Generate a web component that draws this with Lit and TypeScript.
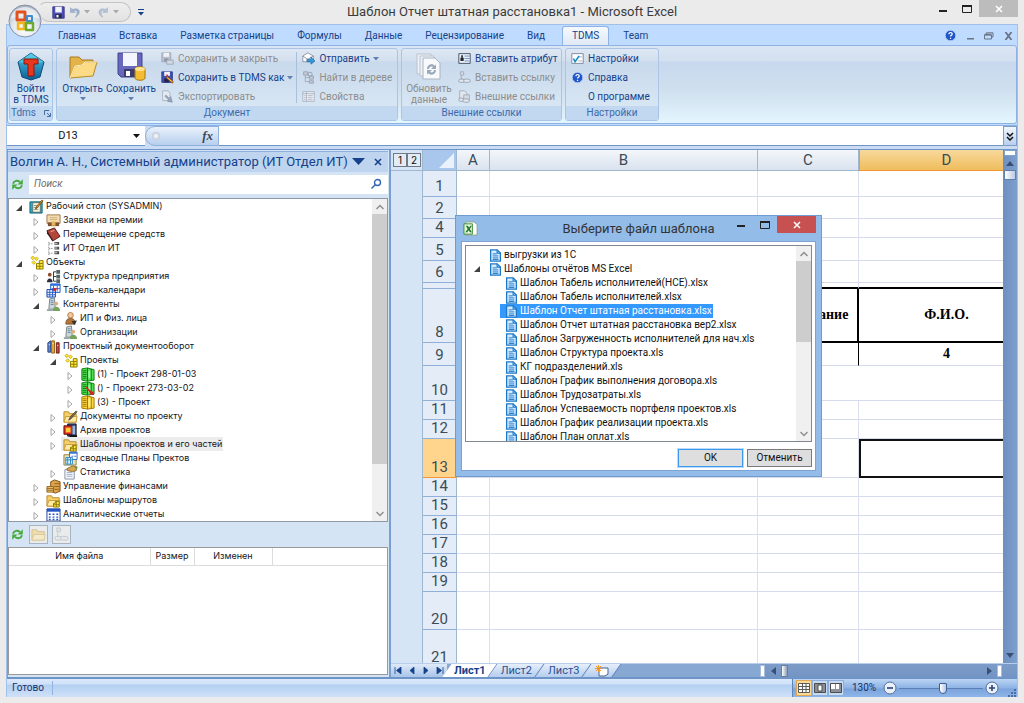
import { LitElement, html, css, svg, nothing, TemplateResult } from "lit";
import { customElement, state } from "lit/decorators.js";
import { classMap } from "lit/directives/class-map.js";
import { styleMap } from "lit/directives/style-map.js";

const diamonds = svg`<path d="M4 1l2 2-2 2-2-2zM8 2l2 2-2 2-2-2zM5 6l2 2-2 2-2-2z" fill="#ffe52e" stroke="#b59a00" stroke-width=".7"/>
  <path d="M8 15V9h3V6h4v9z" fill="#ffe93b" stroke="#8c7a00"/><path d="M8 12h7M11 9h4M11.500 9v6" stroke="#8c7a00"/>`;
const folder = svg`<path d="M1 14V3h5l1 2h7v9z" fill="#f4cf6b" stroke="#b98a25"/><path d="M1 14l2-6h12l-1 6z" fill="#ffe9a6" stroke="#c79b35"/>`;
const cabinet = (a: string, b: string) => svg`<path d="M2 2l6-1v14l-6-1z" fill="${a}" stroke="${b}"/><path d="M8 1l7 2v11l-7 1z" fill="${a}" stroke="${b}"/>
  <path d="M3 4h4M3 6h4M3 8h4M3 10h4M3 12h4M12 2v12" stroke="${b}"/><path d="M9 4h2v8H9z" fill="#fff" opacity=".5"/>`;
const bust = (a: string) => svg`<circle cx="8" cy="4.500" r="3" fill="#f6c795" stroke="#8c5a2a" stroke-width=".7"/><path d="M3 14c0-5 2-6 5-6s5 1 5 6z" fill="${a}" stroke="#5b4225" stroke-width=".7"/>`;

const ICONS: Record<string, TemplateResult | TemplateResult<2>> = {
  desk: svg`<path d="M1 3h13v12H1z" fill="#29a9bd" stroke="#12687a"/><path d="M4 4h8v10H4z" fill="#fff8dc" stroke="#555" stroke-width=".7"/><path d="M5 7h4M5 9h5M5 11h5" stroke="#8a8a8a"/><path d="M7 11l1-3 6-7 1 1-6 7z" fill="#f0a521" stroke="#5c3a06" stroke-width=".8"/>`,
  cert: svg`<path d="M1 2h14v9H1z" fill="#f3ddb0" stroke="#9d7a48"/><path d="M2 10h12v4H2z" fill="#7d5232"/><path d="M6 9h4v6l-2-2-2 2z" fill="#e3b65b"/><path d="M4 5h8M4 7h8" stroke="#cfae7a"/>`,
  book: svg`<path d="M1 4l8-3 6 9-8 5z" fill="#b5463c" stroke="#5a1712"/><path d="M1 4v3l6 8v-2z" fill="#3b1a18"/><path d="M5 5l4-1.500" stroke="#f0b0a5"/>`,
  tree: svg`<path d="M3 1v14M3 3h4M3 8h4M3 13h4" stroke="#8a8a8a" stroke-dasharray="1.500 1"/><path d="M9 1h5v3H9zM9 6h5v3H9zM9 11h5v3H9z" fill="#4a4a4a"/><path d="M9 2.500h3M9 7.500h3M9 12.500h3" stroke="#ddd"/>`,
  objects: diamonds,
  struct: svg`<circle cx="4" cy="6" r="2" fill="#8c4b2a"/><path d="M1 14c0-5 6-5 6 0z" fill="#2d2d3b"/><path d="M8 3v10M8 3h3M8 8h3M8 13h3" stroke="#333"/><path d="M11 1h4v4h-4zM11 6h4v4h-4zM11 11h4v4h-4z" fill="#566" />`,
  calendar: svg`<path d="M5 1h10v9H5z" fill="#fff" stroke="#1256c8"/><path d="M5 1h10v2H5z" fill="#2d6fe0"/><path d="M1 7h9v8H1z" fill="#e8f0ff" stroke="#0f3fa8"/><path d="M1 10h9M1 12.500h9M4 7v8M7 7v8M8 3v6M12 3v6M6 6h9" stroke="#1c55c9" stroke-width=".9"/><path d="M8 5l4 1-3 3z" fill="#e02020"/>`,
  partner: svg`<path d="M4 2l5-1 1 12H3z" fill="#cdd5d8" stroke="#76838a"/><path d="M5 4h3M5 6h3M5 8h3" stroke="#5f8aa8"/><circle cx="11" cy="7" r="2" fill="#e3ad76"/><path d="M7 15c0-6 8-6 8 0z" fill="#76a35c"/><path d="M1 13h6v2H1z" fill="#9aa5a8"/>`,
  person: svg`${bust("#b87436")}<path d="M9 11l6-1-3 5z" fill="#333"/>`,
  books: svg`<path d="M2 4l3-2v12H2z" fill="#5f86d8" stroke="#26427c"/><path d="M6 2h3v13H6z" fill="#e8b23d" stroke="#875f10"/><path d="M11 4h3v11h-3z" fill="#c8463a" stroke="#6b1a14"/><path d="M3 6h1M7 5h1M12 7h1" stroke="#fff"/>`,
  green: cabinet("#4fe04f", "#0d7a12"),
  greenred: svg`${cabinet("#4fe04f", "#0d7a12")}<path d="M7 6l6 6 1-2 1 5-5-1 1-1-5-6z" fill="#e01b2b"/>`,
  yellow: cabinet("#ffd83d", "#a07400"),
  folderpen: svg`${folder}<path d="M6 12l2-4 6-6 1 1-6 7z" fill="#7a6a55" stroke="#3f3424" stroke-width=".7"/>`,
  folder,
  archive: svg`<path d="M5 1h9v13H5z" fill="#2d4e92" stroke="#111"/><path d="M1 3h9v9H1z" fill="#e83121" stroke="#5c0c06"/><path d="M3 5h5v5H3z" fill="#ffcf3a"/><path d="M10 3h3v9h-3z" fill="#8fb8e8"/><path d="M7 13h8v2H7z" fill="#111"/>`,
  foldergrid: svg`${folder}<path d="M8 15v-4h2V9h4v6z" fill="#ffe93b" stroke="#8c7a00"/><path d="M8 12.500h6M11 9v6" stroke="#8c7a00"/>`,
  plans: svg`<path d="M1 4h6l1 2h6v9H1z" fill="#e9e4b5" stroke="#8c8140"/><path d="M7 1h8v8H7z" fill="#fff" stroke="#2b62b8"/><path d="M7 1h8v2H7zM9 5h2v1H9zM12 5h2v1h-2z" fill="#3b78d6"/><path d="M3 7h7v7H3z" fill="#eaf4ff" stroke="#2a86c4"/><path d="M3 9.500h7M5 7v7M8 7v7" stroke="#2a86c4"/>`,
  stats: svg`<path d="M2 5h10v10H2z" fill="#f2f5fa" stroke="#8793a5"/><path d="M4 8h6M4 10h6M4 12h6" stroke="#a3b2c8"/><path d="M4 4l6-3 5 1-1 4-4 1-5-1z" fill="#d9a84e" stroke="#7c5417" stroke-width=".8"/><path d="M12 2h3v3z" fill="#5a9a3c"/>`,
  finance: svg`<path d="M5 3l4-2 6 2v10l-5 2-5-2z" fill="#dca34a" stroke="#7d4e13"/><path d="M1 8h7v6H1z" fill="#f0c878" stroke="#94641e"/><path d="M1 10h7M1 12h7M9 5h6M9 8h6M9 11h6" stroke="#94641e"/>`,
  table: svg`<path d="M1 2h14v13H1z" fill="#fff" stroke="#1a3f98"/><path d="M1 2h14v3H1z" fill="#2453c4"/><path d="M3 7h2v1.500H3zM7 7h2v1.500H7zM11 7h2v1.500h-2zM3 10h2v1.500H3zM7 10h2v1.500H7zM11 10h2v1.500h-2zM3 12.500h2v1.500H3zM7 12.500h2v1.500H7zM11 12.500h2v1.500h-2z" fill="#2453c4"/>`,
  doc: svg`<path d="M2 1h8l4 4v10H2z" fill="#d9ecff" stroke="#1c79c9" stroke-width="1.600"/><path d="M10 1v4h4" fill="none" stroke="#1c79c9" stroke-width="1.400"/><path d="M4.500 6h5M4.500 8.500h7M4.500 11h7M4.500 13h7" stroke="#1c79c9" stroke-width="1.200"/>`,
  refresh: svg`<path d="M2.500 7C3.500 3 8 2.500 11 5M13.500 9c-1 4-5.500 4.500-8.500 2" fill="none" stroke="#45ab3c" stroke-width="2.400"/><path d="M14.500 1.500V8H8zM1.500 14.500V8H8z" fill="#45ab3c"/>`,
  search: svg`<circle cx="10" cy="6" r="4" fill="none" stroke="#2f62b0" stroke-width="1.800"/><path d="M7 9l-5 5" stroke="#2f62b0" stroke-width="2"/>`,
  floppy: svg`<path d="M1 1h14v14H1z" fill="#4d4fb5" stroke="#2b2c80"/><path d="M4 1h8v7H4z" fill="#f2f5fc"/><path d="M4 10h8v5H4z" fill="#2a2a4d"/><path d="M5.500 11h2.500v3H5.500z" fill="#fff"/>`,
  undo: svg`<path d="M3 2v6h6L7 6c4-2 6 2 2 8 8-5 6-13-3-10L5 4z" fill="#9fb1cf" stroke="#8296b8" stroke-width=".5"/>`,
  redo: svg`<path d="M13 2v6H7l2-2C5 4 4 8 7 14-1 9 2 1 10 4l1 0z" fill="#b6c2d6" stroke="#9aa8c0" stroke-width=".5"/>`,
  saveclose: svg`<path d="M1 1h11v11H1z" fill="#b8c0cf" stroke="#97a2b5"/><path d="M3 1h7v5H3z" fill="#eef1f6"/><path d="M4 8h5v4H4z" fill="#8d97a8"/><path d="M7 10h8v5H7z" fill="#d3d8e2" stroke="#97a2b5"/>`,
  saveas: svg`<path d="M1 1h13v13H1z" fill="#3f52b8" stroke="#27357f"/><path d="M4 1h7v5H4z" fill="#f2f5fc"/><path d="M4 9h6v5H4z" fill="#1e2550"/><path d="M7 6l8 7-1 2-7-6z" fill="#f6c445" stroke="#8a3a1a"/><path d="M6 4l3 1-1 3z" fill="#d83a22"/>`,
  exporting: svg`<path d="M2 1h7l2 3v9H2z" fill="#e6eaf0" stroke="#a3adbd"/><path d="M6 6l4 4 2-2 2 7-6-1 1-2-4-4z" fill="#97a5bb" stroke="#76859e" stroke-width=".6"/>`,
  send: svg`<path d="M1 5l6-4 7 4v7H1z" fill="#fff" stroke="#7d8797"/><path d="M1 5l6 4 7-4" fill="none" stroke="#7d8797"/><path d="M6 9h5V6l5 5-5 4v-3H6z" fill="#2f9be0" stroke="#15609c" stroke-width=".7"/>`,
  find: svg`<path d="M4 4v9M4 8h5M4 13h5" stroke="#9aa5b5"/><path d="M2 1h5v4H2zM9 6h5v4H9zM9 12h5v3H9z" fill="#c6cdd8" stroke="#929db0"/><circle cx="10" cy="4" r="2.500" fill="none" stroke="#8b97aa"/>`,
  props: svg`<path d="M1 2h14v12H1z" fill="#eef1f5" stroke="#a3adbd"/><path d="M1 4.500h14M5.500 2v12M7 7h6M7 9.500h6M7 12h6M2.500 7h2M2.500 9.500h2M2.500 12h2" stroke="#a3adbd"/>`,
  attr: svg`<path d="M1 2h14v12H1z" fill="#e8f1fb" stroke="#2f3a4c"/><path d="M3 7h4v4H3z" fill="#222"/><path d="M4 4h2v3H4z" fill="#222"/><path d="M8 5h6M8 8h6M8 11h6" stroke="#5d7fae"/>`,
  link: svg`<path d="M3 1h4v4H3z" fill="#d5dae3" stroke="#9ba6b8"/><path d="M4 5v6h3" fill="none" stroke="#9ba6b8"/><rect x="1" y="10" width="7" height="4" rx="2" fill="#e3e7ed" stroke="#8f9bb0"/><rect x="7" y="10" width="8" height="4" rx="2" fill="#e3e7ed" stroke="#8f9bb0"/>`,
  links: svg`<path d="M2 1h6l3 3v8H2z" fill="#e3e7ed" stroke="#9ba6b8"/><path d="M7 6h7v7H7z" fill="#d5dae3" stroke="#9ba6b8"/><rect x="1" y="10" width="6" height="4" rx="2" fill="#e3e7ed" stroke="#8f9bb0"/><rect x="6" y="11" width="8" height="4" rx="2" fill="#e3e7ed" stroke="#8f9bb0"/>`,
  check: svg`<path d="M1 2h14v12H1z" fill="#fff" stroke="#6c7a90"/><path d="M9 6h5M9 11h5" stroke="#9aa5b5"/><path d="M3 8l2 4 5-7" fill="none" stroke="#1d8bc4" stroke-width="2"/>`,
  help: svg`<circle cx="8" cy="8" r="6.500" fill="#1f56c8" stroke="#b9cdf2" stroke-width="1.200"/><path d="M6 6.500c0-3 4.500-2.800 4 0-.3 1.200-2 1.200-2 2.800" fill="none" stroke="#fff" stroke-width="1.500"/><path d="M7.300 10.800h1.500v1.500H7.300z" fill="#fff"/>`,
  excel: svg`<path d="M3 1h9l3 3v11H3z" fill="#fff" stroke="#8aa58a"/><path d="M1 3h9v11H1z" fill="#e6f4e0" stroke="#3a8b35"/><path d="M3 5h2l1.500 2L8 5h1.500L7.300 8.500 9.500 12H7.500L6 9.800 4.500 12H2.500L5 8.500z" fill="#1f7a28"/>`,
};

const icon = (name: string, cls = "i15") => html`<svg class=${cls} viewBox="0 0 16 16" aria-hidden="true">${ICONS[name]}</svg>`;
const down = html`<svg class="caret" viewBox="0 0 6 4" aria-hidden="true"><path d="M0 0h6L3 3.500z" fill="currentColor"/></svg>`;
const chevron = (d: string) => html`<svg class="chev" viewBox="0 0 8 6" aria-hidden="true"><path d=${d} fill="none" stroke="#8f8f8f" stroke-width="1.500"/></svg>`;
const UP = "M.5 5L4 1.500 7.500 5", DOWN = "M.5 1L4 4.500 7.500 1";

const twisty = (s: string) => s === "" ? html`<span class="twisty"></span>` : html`<button class="twisty" aria-label=${s === "o" ? "Свернуть" : "Развернуть"}>
  <svg class="i8" viewBox="0 0 8 8" aria-hidden="true">${s === "o" ? svg`<path d="M7 1v6H1z" fill="#404040"/>` : svg`<path d="M2 .5v7L6 4z" fill="#fff" stroke="#a6a6a6"/>`}</svg></button>`;

interface Node { l: number; t: string; i: string; s: string }
const n = (l: number, s: string, i: string, t: string): Node => ({ l, s, i, t });
const rowClass = (r: Node, sel: boolean) => classMap({ row: true, ["l" + r.l]: true, sel });

const TREE: Node[] = [
  n(0, "o", "desk", "Рабочий стол (SYSADMIN)"), n(1, "c", "cert", "Заявки на премии"), n(1, "c", "book", "Перемещение средств"),
  n(1, "c", "tree", "ИТ Отдел ИТ"), n(0, "o", "objects", "Объекты"), n(1, "c", "struct", "Структура предприятия"),
  n(1, "c", "calendar", "Табель-календари"), n(1, "o", "partner", "Контрагенты"), n(2, "c", "person", "ИП и Физ. лица"),
  n(2, "c", "partner", "Организации"), n(1, "o", "books", "Проектный документооборот"), n(2, "o", "objects", "Проекты"),
  n(3, "c", "green", "(1) - Проект 298-01-03"), n(3, "c", "greenred", "() - Проект 273-03-02"), n(3, "c", "yellow", "(3) - Проект"),
  n(2, "c", "folderpen", "Документы по проекту"), n(2, "c", "archive", "Архив проектов"),
  n(2, "c", "foldergrid", "Шаблоны проектов и его частей"), n(2, "", "plans", "сводные Планы Пректов"),
  n(2, "c", "stats", "Статистика"), n(1, "c", "finance", "Управление финансами"), n(1, "c", "foldergrid", "Шаблоны маршрутов"),
  n(1, "c", "table", "Аналитические отчеты"),
];

const FILES: Node[] = [
  n(0, "", "doc", "выгрузки из 1С"), n(0, "o", "doc", "Шаблоны отчётов MS Excel"),
  ...["Шаблон Табель исполнителей(НСЕ).xlsx", "Шаблон Табель исполнителей.xlsx", "Шаблон Отчет штатная расстановка.xlsx",
    "Шаблон Отчет штатная расстановка вер2.xlsx", "Шаблон Загруженность исполнителей для нач.xls", "Шаблон Структура проекта.xls",
    "КГ подразделений.xls", "Шаблон График выполнения договора.xls", "Шаблон Трудозатраты.xls", "Шаблон Успеваемость портфеля проектов.xls",
    "Шаблон График реализации проекта.xls", "Шаблон План оплат.xls"].map(t => n(1, "", "doc", t)),
];

const ROWS: [number, number][] = [[1, 26], [2, 22], [4, 19], [5, 23], [6, 22], [7, 6], [8, 54], [9, 23], [10, 35], [11, 19], [12, 19],
  [13, 39], [14, 19], [15, 19], [16, 19], [17, 19], [18, 19], [19, 19], [20, 38], [21, 38]];

const shared = css`
  *, *::before, *::after { box-sizing: border-box; }
  :host { box-sizing: border-box; }
  button, input { font: inherit; color: inherit; margin: 0; padding: 0; border: 0; background: none; min-width: 0; }
  svg { display: block; flex: none; }
  .i8 { width: 8px; height: 8px; }
  .i11 { width: 12px; height: 12px; }
  .i13 { width: 13px; height: 13px; }
  .i15 { width: 15px; height: 15px; }
  .chev { width: 8px; height: 6px; }
  .rows { flex: 1; min-width: 0; overflow: hidden; list-style: none; margin: 0; padding: 0; }
  .row { display: flex; align-items: center; height: 14px; white-space: nowrap; }
  .twisty { flex: none; display: grid; place-items: center; height: 14px; }
  .scroll { display: flex; flex-direction: column; align-items: center; background: #f0f0f0; flex: none; }
  .scroll .arrow { height: 15px; display: grid; place-items: center; flex: none; }
  .thumb { background: #cdcdcd; width: 100%; }
  .gap { flex: 1; }
`;

@customElement("tdms-pane")
class TdmsPane extends LitElement {
  static styles = [shared, css`
    :host { display: flex; flex-direction: column; flex: none; width: 384px; background: #d5e4f4; font: 9px/14px Inter, sans-serif; color: #15151c; border: solid #7b9fcd; border-width: 0 2px 0 1px; padding: 1px 1px 2px 0; }
    .head { display: flex; align-items: center; flex: none; height: 21px; background: #bfd4ee; border-top: 1px solid #8fb0dc; color: #15428b; font: 13px/20px Roboto, sans-serif; padding: 0 1px 0 2px; }
    .head h2 { flex: 1; font: inherit; margin: 0; white-space: nowrap; }
    .head button { display: grid; place-items: center; width: 19px; height: 16px; }
    .search { display: flex; align-items: center; flex: none; height: 26px; gap: 5px; padding: 0 0 2px 3px; }
    .box { flex: 1; display: flex; align-items: center; height: 19px; background: #fff; padding: 0 6px 0 5px; }
    .box input { flex: 1; height: 15px; padding-bottom: 2px; outline: 0; font: italic 10px/13px Roboto, sans-serif; }
    .box input::placeholder { color: #6d6d6d; }
    .tree { display: flex; flex: none; height: 324px; background: #fff; border: 1px solid #8f98a5; }
    .row .twisty { width: 20px; }
    .row .i15 { margin-right: 2px; }
    .l1 { padding-left: 17px; }
    .l2 { padding-left: 34px; }
    .l3 { padding-left: 51px; }
    .row .i8 { margin: 3px 0 0; }
    .label { padding-right: 1px; }
    .sel .label { background: #ececec; box-shadow: -19px 0 0 #ececec; }
    .sel svg { position: relative; z-index: 1; }
    .scroll { width: 15px; }
    .thumb { height: 250px; }
    .tools { display: flex; align-items: center; height: 25px; gap: 4px; padding-left: 3px; flex: none; }
    .plain { width: 14px; }
    .sq { width: 19px; height: 19px; border: 1px solid #a8b4c2; background: #e9ecea; display: grid; place-items: center; }
    .sq svg { opacity: .45; }
    .files { flex: 1; background: #fff; border: 1px solid #9a9a9a; min-height: 40px; }
    table { width: 100%; border-collapse: collapse; table-layout: fixed; }
    th { font-weight: 400; height: 17px; padding: 0; border-right: 1px solid #dcdcdc; border-bottom: 1px solid #dcdcdc; text-align: center; }
    th:last-child { border-right: 0; }
    .w1 { width: 141px; } .w2 { width: 44px; } .w3 { width: 78px; }
  `];
  @state() private picked = 17;
  render() {
    return html`
      <div class="head"><h2>Волгин А. Н., Системный администратор (ИТ Отдел ИТ)</h2>
        <button aria-label="Меню"><svg width="13" height="8" viewBox="0 0 13 8"><path d="M0 0h13L6.500 7z" fill="#15428b"/></svg></button>
        <button aria-label="Закрыть"><svg width="8" height="8" viewBox="0 0 8 8"><path d="M1 1l6 6M7 1L1 7" stroke="#15428b" stroke-width="1.600"/></svg></button></div>
      <div class="search"><button aria-label="Обновить">${icon("refresh", "i13")}</button>
        <div class="box"><input type="search" aria-label="Поиск" placeholder="Поиск"><button aria-label="Найти">${icon("search", "i11")}</button></div></div>
      <div class="tree"><ul class="rows">${TREE.map((r, k) => html`<li class=${rowClass(r, k === this.picked)} @click=${() => { this.picked = k; }}>${twisty(r.s)}${icon(r.i)}<span class="label">${r.t}</span></li>`)}</ul>
        <div class="scroll"><span class="arrow">${chevron(UP)}</span><span class="thumb"></span><span class="gap"></span><span class="arrow">${chevron(DOWN)}</span></div></div>
      <div class="tools"><button class="plain" aria-label="Обновить">${icon("refresh", "i13")}</button>
        <button class="sq" aria-label="Открыть" disabled>${icon("folder")}</button><button class="sq" aria-label="Связать" disabled>${icon("link")}</button></div>
      <div class="files"><table><colgroup><col class="w1"><col class="w2"><col class="w3"><col></colgroup>
        <thead><tr><th>Имя файла</th><th>Размер</th><th>Изменен</th><th></th></tr></thead></table></div>`;
  }
}

@customElement("template-dialog")
class TemplateDialog extends LitElement {
  static styles = [shared, css`
    :host { display: flex; flex-direction: column; width: 367px; background: #93bce9; border: 1px solid #6f9bd0; padding: 0 5px 5px; font: 10px/14px Roboto, sans-serif; color: #111; }
    .bar { display: grid; grid-template-columns: 1fr auto 1fr; align-items: center; height: 25px; font: 13px/22px Roboto, sans-serif; color: #333; }
    .bar .i15 { margin-left: 2px; }
    .bar h2 { font: inherit; margin: 0; white-space: nowrap; }
    .wb { display: flex; justify-content: flex-end; align-self: start; height: 17px; }
    .wb button { display: grid; place-items: center; width: 24px; height: 17px; }
    .wb .x { width: 39px; background: #c75050; }
    .body { background: #fff; border: 1px solid #7ea3d0; padding: 3px 3px 3px; }
    .list { display: flex; height: 197px; border: 1px solid #828790; overflow: hidden; }
    .rows { padding-top: 2px; }
    .twisty { width: 22px; }
    .list .i13 { width: 15px; height: 13px; }
    .label { padding: 0 1px; }
    .l1 { padding-left: 16px; }
    .sel .label { background: #3399ff; color: #fff; box-shadow: -19px 0 0 #3399ff; }
    .sel svg { position: relative; z-index: 1; }
    .scroll { width: 15px; }
    .thumb { height: 81px; }
    .foot { display: flex; justify-content: flex-end; gap: 4px; padding-top: 7px; }
    .foot button { width: 65px; height: 18px; background: #dedede; border: 1px solid #7a7a7a; }
    .foot .ok { border-color: #3c99ee; box-shadow: 0 0 0 1px #b9dcfb; }
  `];
  @state() private picked = 4;
  render() {
    return html`<div class="bar">${icon("excel")}<h2>Выберите файл шаблона</h2>
      <div class="wb"><button aria-label="Свернуть"><svg width="8" height="8" viewBox="0 0 8 8"><path d="M0 4h8v2H0z" fill="#222"/></svg></button>
        <button aria-label="Развернуть"><svg width="10" height="8" viewBox="0 0 10 8"><path d="M.5 1h9v6.500h-9z" fill="none" stroke="#222"/><path d="M0 0h10v2H0z" fill="#222"/></svg></button>
        <button class="x" aria-label="Закрыть"><svg width="8" height="8" viewBox="0 0 8 8"><path d="M1 1l6 6M7 1L1 7" stroke="#fff" stroke-width="1.500"/></svg></button></div></div>
      <div class="body"><div class="list"><ul class="rows">${FILES.map((r, k) => html`<li class=${rowClass(r, k === this.picked)} @click=${() => { this.picked = k; }}>${twisty(r.s)}${icon(r.i, "i13")}<span class="label">${r.t}</span></li>`)}</ul>
        <div class="scroll"><span class="arrow">${chevron(UP)}</span><span class="thumb"></span><span class="gap"></span><span class="arrow">${chevron(DOWN)}</span></div></div>
      <div class="foot"><button class="ok">OK</button><button>Отменить</button></div></div>`;
  }
}

@customElement("work-sheet")
class WorkSheet extends LitElement {
  static styles = [shared, css`
    :host { display: flex; flex: 1; min-height: 0; overflow: hidden; }
    .outline { width: 32px; flex: none; background: #d6e5f5; border-right: 1px solid #9eb6ce; }
    .lv { display: flex; height: 21px; padding: 3px 0 0 2px; border-bottom: 1px solid #9eb6ce; }
    .lv button { width: 14px; height: 14px; border: 1px solid #707a88; background: #e3ebf5; font: 10px/12px Inter, sans-serif; color: #111; }
    .grid { flex: 1; min-width: 0; overflow: hidden; background: #fff; }
    table { width: calc(100% + 32px); border-collapse: separate; border-spacing: 0; table-layout: fixed; font: 15px/17px Roboto, sans-serif; color: #3c4b55; }
    th, td { padding: 0; font-weight: 400; overflow: hidden; white-space: nowrap; text-align: center; }
    thead th { height: 21px; background: linear-gradient(#f4f7fb, #d9e2ee); border-right: 1px solid #9eb6ce; border-bottom: 1px solid #9eb6ce; }
    thead .corner { background: #a9c6ec; }
    .corner svg { margin: 0 2px 0 auto; }
    thead .on { background: linear-gradient(#f8d99d, #efbd5c); border-bottom-color: #f29536; border-right-color: #f29536; box-shadow: inset 1px 0 0 #f29536; }
    tbody th { background: #e4ecf7; border-right: 1px solid #9eb6ce; border-bottom: 1px solid #8fb0d8; vertical-align: bottom; padding-bottom: 3px; line-height: 13px; }
    tbody th:empty { padding: 0; }
    tbody th.on { background: #ffd58d; border-color: #f29536; }
    td { border-right: 1px solid #dadfed; border-bottom: 1px solid #d5dbea; font: bold 14px/18px "Liberation Serif", serif; color: #000; }
    td.tb { border-bottom: 2px solid #000; }
    td.rb { border-right: 2px solid #000; }
    td.r1 { border-right-color: #000; }
    td.cell { border: 2px solid #111; border-right: 0; }
    .c0 { width: 34px; } .c1 { width: 33px; } .c2 { width: 268px; } .c3 { width: 101px; }
    .v { width: 14px; flex: none; background: linear-gradient(90deg, #6d8fc1, #7f9fcc); display: flex; flex-direction: column; align-items: center; gap: 4px; padding-bottom: 4px; }
    .split { width: 12px; height: 6px; background: #fff; border: 1px solid #7fa3cf; }
    .v .box { width: 12px; height: 10px; background: linear-gradient(90deg, #fff, #b9cbe5); border: 1px solid #5f7fae; }
  `];
  private row([num, h]: [number, number]) {
    const on = num === 13;
    const cells = num === 10 ? html`<td colspan="4"></td>`
      : num === 7 ? html`<td class="tb"></td><td class="tb"></td><td class="tb"></td><td class="tb"></td>`
      : num === 8 ? html`<td class="tb"></td><td class="tb rb"></td><td class="tb rb">Образование</td><td class="tb">Ф.И.О.</td>`
      : num === 9 ? html`<td></td><td></td><td class="r1"></td><td>4</td>`
      : html`<td></td><td></td><td></td><td class=${on ? "cell" : ""}></td>`;
    return html`<tr style=${styleMap({ height: h + "px" })}><th scope="row" class=${on ? "on" : ""}>${num === 7 ? nothing : num}</th>${cells}</tr>`;
  }
  render() {
    return html`<div class="outline"><div class="lv"><button>1</button><button>2</button></div></div>
      <div class="grid"><table><colgroup><col class="c0"><col class="c1"><col class="c2"><col class="c3"><col></colgroup>
        <thead><tr><th class="corner"><svg width="15" height="15" viewBox="0 0 15 15"><path d="M15 0v15H0z" fill="#eaf1fa"/></svg></th><th>A</th><th>B</th><th>C</th><th class="on">D</th></tr></thead>
        <tbody>${ROWS.map(r => this.row(r))}</tbody></table></div>
      <div class="v"><span class="split"></span><svg width="8" height="6" viewBox="0 0 8 6"><path d="M4 1l4 5H0z" fill="#3a4f78"/></svg><span class="box"></span><span class="gap"></span>
        <svg width="8" height="6" viewBox="0 0 8 6"><path d="M4 5l4-5H0z" fill="#3a4f78"/></svg></div>`;
  }
}

@customElement("app-root")
class AppRoot extends LitElement {
  static styles = [shared, css`
    :host { display: flex; flex-direction: column; height: 100vh; min-height: 480px; background: #ebebeb; font: 10px/14px Roboto, sans-serif; color: #15428b; overflow: hidden; position: relative; padding: 0 6px 6px; }
    button { white-space: nowrap; }
    .caret { width: 6px; height: 4px; }
    .title { display: grid; grid-template-columns: 1fr auto 1fr; align-items: center; height: 24px; flex: none; color: #3b3b3b; }
    .title h1 { font: 13px/24px Roboto, sans-serif; margin: 0; white-space: nowrap; }
    .qat { display: flex; align-items: center; gap: 7px; }
    .pill { display: flex; align-items: center; gap: 5px; margin-left: 32px; padding: 0 9px 0 13px; height: 20px; width: 93px; border: 1px solid #c4c4c4; border-left-color: transparent; border-radius: 8px 10px 10px 12px; color: #a9a9a9; background: linear-gradient(#eee, #e2e2e2); }
    .pill .caret { margin-right: 2px; }
    .more { color: #15428b; border-top: 1px solid #15428b; padding-top: 2px; }
    .wb { display: flex; justify-content: flex-end; align-self: start; }
    .wb button { display: grid; place-items: center; width: 24px; height: 17px; color: #222; }
    .wb .x { width: 39px; background: #bcbcbc; }
    .orb { position: absolute; left: 8px; top: 4px; }
    .frame { flex: 1; min-height: 0; display: flex; flex-direction: column; border: 1px solid #9fc0ea; border-bottom: 0; background: #bfdbff; }
    .tabs { display: flex; align-items: stretch; height: 20px; flex: none; padding: 1px 4px 0 39px; }
    .tab { padding: 0 11px 0 12px; height: 19px; color: #15428b; }
    .active { background: linear-gradient(#f5f9fe, #dfe9f5); border: 1px solid #8db2e3; border-bottom: 0; border-radius: 3px 3px 0 0; padding: 0 9px; margin: 0 2px 0 6px; }
    .mdi { display: flex; align-items: center; gap: 10px; color: #6b7585; }
    .ribbon { display: flex; gap: 3px; flex: none; height: 79px; padding: 2px 3px 2px 1px; border: 1px solid #8db2e3; border-radius: 3px; background: linear-gradient(#dbe6f4 0, #d3e0f0 15px, #c7d8ee 16px, #d0e0ef 45px, #e3f5ff); }
    .group { display: flex; flex-direction: column; border: 1px solid #a9c4e4; border-radius: 3px; background: linear-gradient(#dfe8f4 0, #d3dfee 12px, #c8d9ec 13px, #d9e7f4 60px); }
    .group > footer { margin-top: auto; height: 14px; flex: none; background: #c1d8f0; color: #3e6aaa; display: flex; justify-content: center; gap: 8px; align-items: center; }
    .cmds { display: flex; flex: 1; min-height: 0; padding: 0 3px; gap: 3px; }
    .g1 { width: 44px; } .g2 { width: 342px; } .g3 { width: 161px; } .g4 { width: 94px; }
    .g1 .cmds { padding: 0; justify-content: center; }
    .g2 .cmds { padding-left: 5px; }
    .big { display: flex; flex-direction: column; align-items: center; line-height: 11px; gap: 2px; min-width: 41px; }
    .big.wide { min-width: 48px; }
    .pic { width: 32px; height: 32px; }
    .big .caret { margin-top: 1px; color: #5f80b5; }
    .stack { display: flex; flex-direction: column; }
    .sm { display: flex; align-items: center; gap: 3px; height: 19px; padding: 0 0 0 2px; }
    .sm .caret { color: #5f80b5; }
    .sm .i13 { margin-right: 1px; }
    .sm.noicon { padding-left: 19px; }
    .off { color: #8d8d8d; }
    .vr { width: 1px; background: #a9c0dc; margin: 3px 0; }
    .fbar { display: flex; flex: none; height: 24px; margin-top: 1px; border-top: 1px solid #8db2e3; background: #c9dcf3; padding-bottom: 3px; }
    .name { display: flex; align-items: center; width: 138px; background: #fff; color: #111; border-bottom: 1px solid #6f94c8; }
    .name input { width: 122px; text-align: center; outline: 0; font-size: 11px; }
    .name .caret { width: 7px; height: 4px; margin-left: 4px; }
    .fx { display: flex; align-items: center; justify-content: space-between; width: 74px; padding: 0 5px 0 6px; border: 1px solid #8fb0dc; border-radius: 10px 0 0 10px; background: linear-gradient(#eaf2fb, #b7cfee); font: italic bold 13px/16px "Liberation Serif", serif; color: #3c4a5c; }
    .dot { width: 8px; height: 8px; border-radius: 50%; background: radial-gradient(#fff, #a6b4ca); }
    .formula { flex: 1; background: #fff; border-bottom: 1px solid #6f94c8; outline: 0; }
    .expand { width: 14px; background: linear-gradient(#f2f7fd, #b7cfee); border: 1px solid #7d9dc8; display: grid; place-items: center; }
    .main { display: flex; flex: 1; min-height: 0; border-top: 1px solid #6f94c8; background: #7b9fcd; }
    .right { flex: 1; min-width: 0; display: flex; flex-direction: column; }
    .sheets { display: flex; align-items: stretch; height: 14px; flex: none; background: #88a8d4; border-top: 1px solid #b8cfec; }
    .nav { display: flex; align-items: center; justify-content: space-around; width: 56px; background: linear-gradient(#dfeafa, #a9c4e8); }
    .stab { position: relative; font: 11px/13px Roboto, sans-serif; color: #2a4f93; height: 13px; padding: 0 8px; }
    .stab::before { content: ""; position: absolute; inset: 0; background: linear-gradient(#e6effb, #b4cdee); transform: skewX(-35deg); border-right: 1px solid #5f84ba; }
    .stab span { position: relative; }
    .stab.cur { font-weight: 700; color: #15428b; padding: 0 7px; }
    .stab.cur::before { background: #fff; }
    .hs { display: flex; align-items: center; flex: none; width: 257px; padding-right: 15px; background: linear-gradient(#7c9bc8, #7495c4); }
    .e { width: 5px; height: 12px; background: #fff; border: 1px solid #a9bedd; }
    .t { width: 7px; height: 12px; background: linear-gradient(90deg, #fff, #8f9db3); border: 1px solid #6b7d9c; }
    .hs svg { margin: 0 5px 0 6px; }
    .status { display: flex; align-items: center; flex: none; height: 20px; border-top: 2px solid #6f94c8; background: linear-gradient(#dbe9fb 0, #d0e1f8 5px, #b3cff2 6px, #cfe1f7); color: #15306b; }
    .ready { padding: 0 8px 0 5px; border-right: 1px solid #93b4df; }
    .zoom { display: flex; align-items: center; width: 225px; height: 18px; padding: 0 1px 0 3px; border-left: 1px solid #5f84ba; background: linear-gradient(#bcd4f3, #8cb2e4 9px, #7ba4dc 10px, #8fb6ea); }
    .views { display: flex; height: 16px; }
    .views button { display: grid; place-items: center; width: 16px; border: 1px solid #8eaedb; background: #c6daf4; }
    .views .cur { background: #ffd991; border-color: #d9a957; }
    .pct { padding: 0 7px 0 8px; }
    .round { width: 14px; height: 14px; }
    input[type=range] { appearance: none; flex: 1; height: 14px; margin: 0 2px; background: linear-gradient(#5d7fb5, #5d7fb5) center / 100% 1px no-repeat; }
    input[type=range]::-webkit-slider-thumb { appearance: none; width: 8px; height: 11px; background: linear-gradient(90deg, #fff, #b3c8e8); border: 1px solid #3f5f97; border-radius: 1px 1px 4px 4px; }
    .grip { width: 9px; height: 9px; margin-left: 8px; align-self: end; }
    template-dialog { position: absolute; left: 455px; top: 215px; z-index: 5; }
  `];

  private small(ic: string, label: string, off = false, menu = false) {
    return html`<button class=${classMap({ sm: true, off, noicon: !ic })} ?disabled=${off}>${ic ? icon(ic, "i13") : nothing}<span>${label}</span>${menu ? down : nothing}</button>`;
  }

  render() {
    return html`
      <header class="title">
        <div class="qat"><div class="pill"><button aria-label="Сохранить">${icon("floppy", "i13")}</button><button aria-label="Отменить">${icon("undo", "i13")}</button>${down}<button aria-label="Вернуть">${icon("redo", "i13")}</button>${down}</div>
          <button class="more" aria-label="Настройка панели">${down}</button></div>
        <h1>Шаблон Отчет штатная расстановка1 - Microsoft Excel</h1>
        <div class="wb"><button aria-label="Свернуть"><svg width="8" height="8" viewBox="0 0 8 8"><path d="M0 5h8v2H0z" fill="#222"/></svg></button>
          <button aria-label="Развернуть"><svg width="10" height="8" viewBox="0 0 10 8"><path d="M.5 1h9v6.500h-9z" fill="none" stroke="#222"/><path d="M0 0h10v2H0z" fill="#222"/></svg></button>
          <button class="x" aria-label="Закрыть"><svg width="8" height="8" viewBox="0 0 8 8"><path d="M1 1l6 6M7 1L1 7" stroke="#fff" stroke-width="1.600"/></svg></button></div>
      </header>
      <button class="orb" aria-label="Office"><svg width="34" height="34" viewBox="0 0 34 34">
        <defs><radialGradient id="g" cx=".5" cy=".75" r=".7"><stop offset="0" stop-color="#fff"/><stop offset=".6" stop-color="#dfe5ec"/><stop offset="1" stop-color="#a8b3c2"/></radialGradient></defs>
        <circle cx="17" cy="17" r="16" fill="url(#g)" stroke="#8593a8"/><path d="M3 15a14 12 0 0 1 28 0c-8-4-20-4-28 0z" fill="#fff" opacity=".6"/>
        <path d="M9 8h8v8H9z" fill="none" stroke="#e0531f" stroke-width="3" stroke-linejoin="round"/><path d="M19 12h5v5h-5z" fill="none" stroke="#3e8ed0" stroke-width="2" stroke-linejoin="round"/>
        <path d="M10 19h6v6h-6z" fill="none" stroke="#f3b518" stroke-width="2.500" stroke-linejoin="round"/><path d="M18 19h7v7h-7z" fill="none" stroke="#6cab2e" stroke-width="2.500" stroke-linejoin="round"/></svg></button>
      <div class="frame">
        <nav class="tabs">${["Главная", "Вставка", "Разметка страницы", "Формулы", "Данные", "Рецензирование", "Вид"].map(t => html`<button class="tab">${t}</button>`)}
          <button class="tab active">TDMS</button><button class="tab">Team</button><span class="gap"></span>
          <div class="mdi"><button aria-label="Справка">${icon("help", "i13")}</button>
            <button aria-label="Свернуть книгу"><svg width="7" height="8" viewBox="0 0 7 8"><path d="M0 6h7v1.500H0z" fill="currentColor"/></svg></button>
            <button aria-label="Восстановить книгу"><svg width="10" height="8" viewBox="0 0 10 8"><path d="M2.500 2V.8H9V5H7.500M.5 3h7v4h-7z" fill="none" stroke="currentColor"/><path d="M.5 2.500h7" stroke="currentColor" stroke-width="1.500"/></svg></button>
            <button aria-label="Закрыть книгу"><svg width="9" height="8" viewBox="0 0 9 8"><path d="M1.500 0l6 8M7.500 0l-6 8" stroke="currentColor" stroke-width="1.800"/></svg></button></div></nav>
        <div class="ribbon">
          <section class="group g1"><div class="cmds"><button class="big"><svg class="pic" viewBox="0 0 32 32"><defs><linearGradient id="p" x2="0" y2="1"><stop offset="0" stop-color="#4cc6e8"/><stop offset="1" stop-color="#0a5f96"/></linearGradient></defs>
            <path d="M16 4l13 9-4 15-9 3-9-3-4-15z" fill="url(#p)" stroke="#0b4a78"/><path d="M16 4l13 9-8 2-5-4-5 4-8-2z" fill="#63d8ef" opacity=".5"/><path d="M9 10h14v5h-4v12h-6V15H9z" fill="#e8371f" stroke="#8d150a"/></svg><span>Войти<br>в TDMS</span></button></div>
            <footer>Tdms<svg width="7" height="7" viewBox="0 0 7 7"><path d="M.5 5V.5H5M3 3l3 3M6.500 3v3.500H3" fill="none" stroke="#4a6da3"/></svg></footer></section>
          <section class="group g2"><div class="cmds">
            <button class="big"><svg class="pic" viewBox="0 0 32 32"><path d="M3 29V8h9l3 3h11v4" fill="#e3b348" stroke="#a87b1e"/><path d="M3 29l5-12 7-1 3-3h12l-4 14z" fill="#fbdb85" stroke="#b98a25"/><path d="M3 29l5-12 7-1 3-3h12" fill="none" stroke="#fff3c8"/></svg><span>Открыть</span>${down}</button>
            <button class="big wide"><svg class="pic" viewBox="0 0 32 32"><path d="M3 4h24v24H6l-3-3z" fill="#6667bd" stroke="#43448f"/><path d="M8 4h14v13H8z" fill="#f3f6fd"/><path d="M9 20h12v8H9z" fill="#3b3c6e"/><path d="M11 22h4v5h-4z" fill="#fff"/><path d="M20 20c0-3 10-3 10 0v9c0 3-10 3-10 0z" fill="#f4bd35" stroke="#a8770d"/><ellipse cx="25" cy="20" rx="5" ry="2" fill="#ffe390"/></svg><span>Сохранить</span>${down}</button>
            <div class="stack">${this.small("saveclose", "Сохранить и закрыть", true)}${this.small("saveas", "Сохранить в TDMS как", false, true)}${this.small("exporting", "Экспортировать", true)}</div>
            <div class="vr"></div>
            <div class="stack">${this.small("send", "Отправить", false, true)}${this.small("find", "Найти в дереве", true)}${this.small("props", "Свойства", true)}</div></div><footer>Документ</footer></section>
          <section class="group g3"><div class="cmds"><button class="big wide off" disabled><svg class="pic" viewBox="0 0 32 32"><path d="M4 5h14v20H4z" fill="#eef1f5" stroke="#b9c2cf"/><path d="M7 7h14v20H7z" fill="#eef1f5" stroke="#b9c2cf"/><path d="M10 9h12l5 5v16H10z" fill="#f7f9fb" stroke="#a9b4c4"/><path d="M14 20c0-5 6-6 8-3l1-2v5h-5l2-2c-2-1-4 0-4 2zM23 21c0 5-6 6-8 3l-1 2v-5h5l-2 2c2 1 4 0 4-2z" fill="#9aa8bc"/></svg><span>Обновить<br>данные</span></button>
            <div class="stack">${this.small("attr", "Вставить атрибут")}${this.small("link", "Вставить ссылку", true)}${this.small("links", "Внешние ссылки", true)}</div></div><footer>Внешние ссылки</footer></section>
          <section class="group g4"><div class="cmds"><div class="stack">${this.small("check", "Настройки")}${this.small("help", "Справка")}${this.small("", "О программе")}</div></div><footer>Настройки</footer></section>
        </div>
        <div class="fbar"><div class="name"><input aria-label="Имя ячейки" value="D13"><button aria-label="Список имён"><svg class="caret" viewBox="0 0 7 4"><path d="M0 0h7L3.500 4z" fill="#111"/></svg></button></div>
          <button class="fx" aria-label="Вставить функцию"><span class="dot"></span><span>fx</span></button><input class="formula" aria-label="Строка формул">
          <button class="expand" aria-label="Развернуть строку формул"><svg width="8" height="9" viewBox="0 0 8 9"><path d="M1 1l3 3 3-3M1 5l3 3 3-3" fill="none" stroke="#111" stroke-width="1.500"/></svg></button></div>
        <div class="main"><tdms-pane></tdms-pane>
          <div class="right"><work-sheet></work-sheet>
            <div class="sheets"><div class="nav">${["M1 0v7M7 0v7L2.500 3.500z", "M6 0v7L2 3.500z", "M2 0v7l4-3.500z", "M7 0v7M1 0v7l4.500-3.500z"].map(d => html`<button aria-label="Листы"><svg width="8" height="7" viewBox="0 0 8 7"><path d=${d} fill="#15428b" stroke="#15428b" stroke-width=".8"/></svg></button>`)}</div>
              <button class="stab cur"><span>Лист1</span></button><button class="stab"><span>Лист2</span></button><button class="stab"><span>Лист3</span></button>
              <button class="stab" aria-label="Новый лист"><span><svg width="14" height="12" viewBox="0 0 14 12"><path d="M4 3h9v6l-3 2H4z" fill="#fff" stroke="#49658f"/><path d="M3.500 0v7M0 3.500h7M1 1l5 5M6 1L1 6" stroke="#f0962a"/></svg></span></button>
              <span class="gap"></span>
              <div class="hs"><span class="e"></span><svg width="5" height="8" viewBox="0 0 5 8"><path d="M5 0v8L0 4z" fill="#3a4f78"/></svg><span class="t"></span><span class="gap"></span><svg width="5" height="8" viewBox="0 0 5 8"><path d="M0 0v8l5-4z" fill="#3a4f78"/></svg><span class="e"></span></div></div></div></div>
        <div class="status"><span class="ready">Готово</span><span class="gap"></span>
          <div class="zoom"><div class="views"><button class="cur" aria-label="Обычный"><svg width="12" height="10" viewBox="0 0 12 10"><path d="M.5 .5h11v9H.5zM.5 3.500h11M.5 6.500h11M4.500 .5v9M8 .5v9" fill="#fff" stroke="#5b5b5b"/></svg></button>
            <button aria-label="Разметка"><svg width="12" height="10" viewBox="0 0 12 10"><path d="M.5 .5h11v9H.5z" fill="#8a8f98" stroke="#4d4d4d"/><path d="M4 2h4v6H4z" fill="#fff" stroke="#4d4d4d"/></svg></button>
            <button aria-label="Страничный"><svg width="12" height="10" viewBox="0 0 12 10"><path d="M.5 .5h11v9H.5z" fill="#8a8f98" stroke="#4d4d4d"/><path d="M1 1h4v5H1zM6 1h3v5H6z" fill="#fff"/></svg></button></div>
            <span class="pct">130%</span>
            <button aria-label="Уменьшить"><svg class="round" viewBox="0 0 14 14"><circle cx="7" cy="7" r="6" fill="#e9f0fa" stroke="#566f9c"/><path d="M4 7h6" stroke="#2b4474" stroke-width="1.600"/></svg></button>
            <input type="range" aria-label="Масштаб" min="0" max="100" value="52">
            <button aria-label="Увеличить"><svg class="round" viewBox="0 0 14 14"><circle cx="7" cy="7" r="6" fill="#e9f0fa" stroke="#566f9c"/><path d="M4 7h6M7 4v6" stroke="#2b4474" stroke-width="1.600"/></svg></button>
            <svg class="grip" viewBox="0 0 9 9"><path d="M7 1h2v2H7zM4 4h2v2H4zM7 4h2v2H7zM1 7h2v2H1zM4 7h2v2H4zM7 7h2v2H7z" fill="#4a6da3"/></svg></div></div>
      </div>
      <template-dialog></template-dialog>`;
  }
}
